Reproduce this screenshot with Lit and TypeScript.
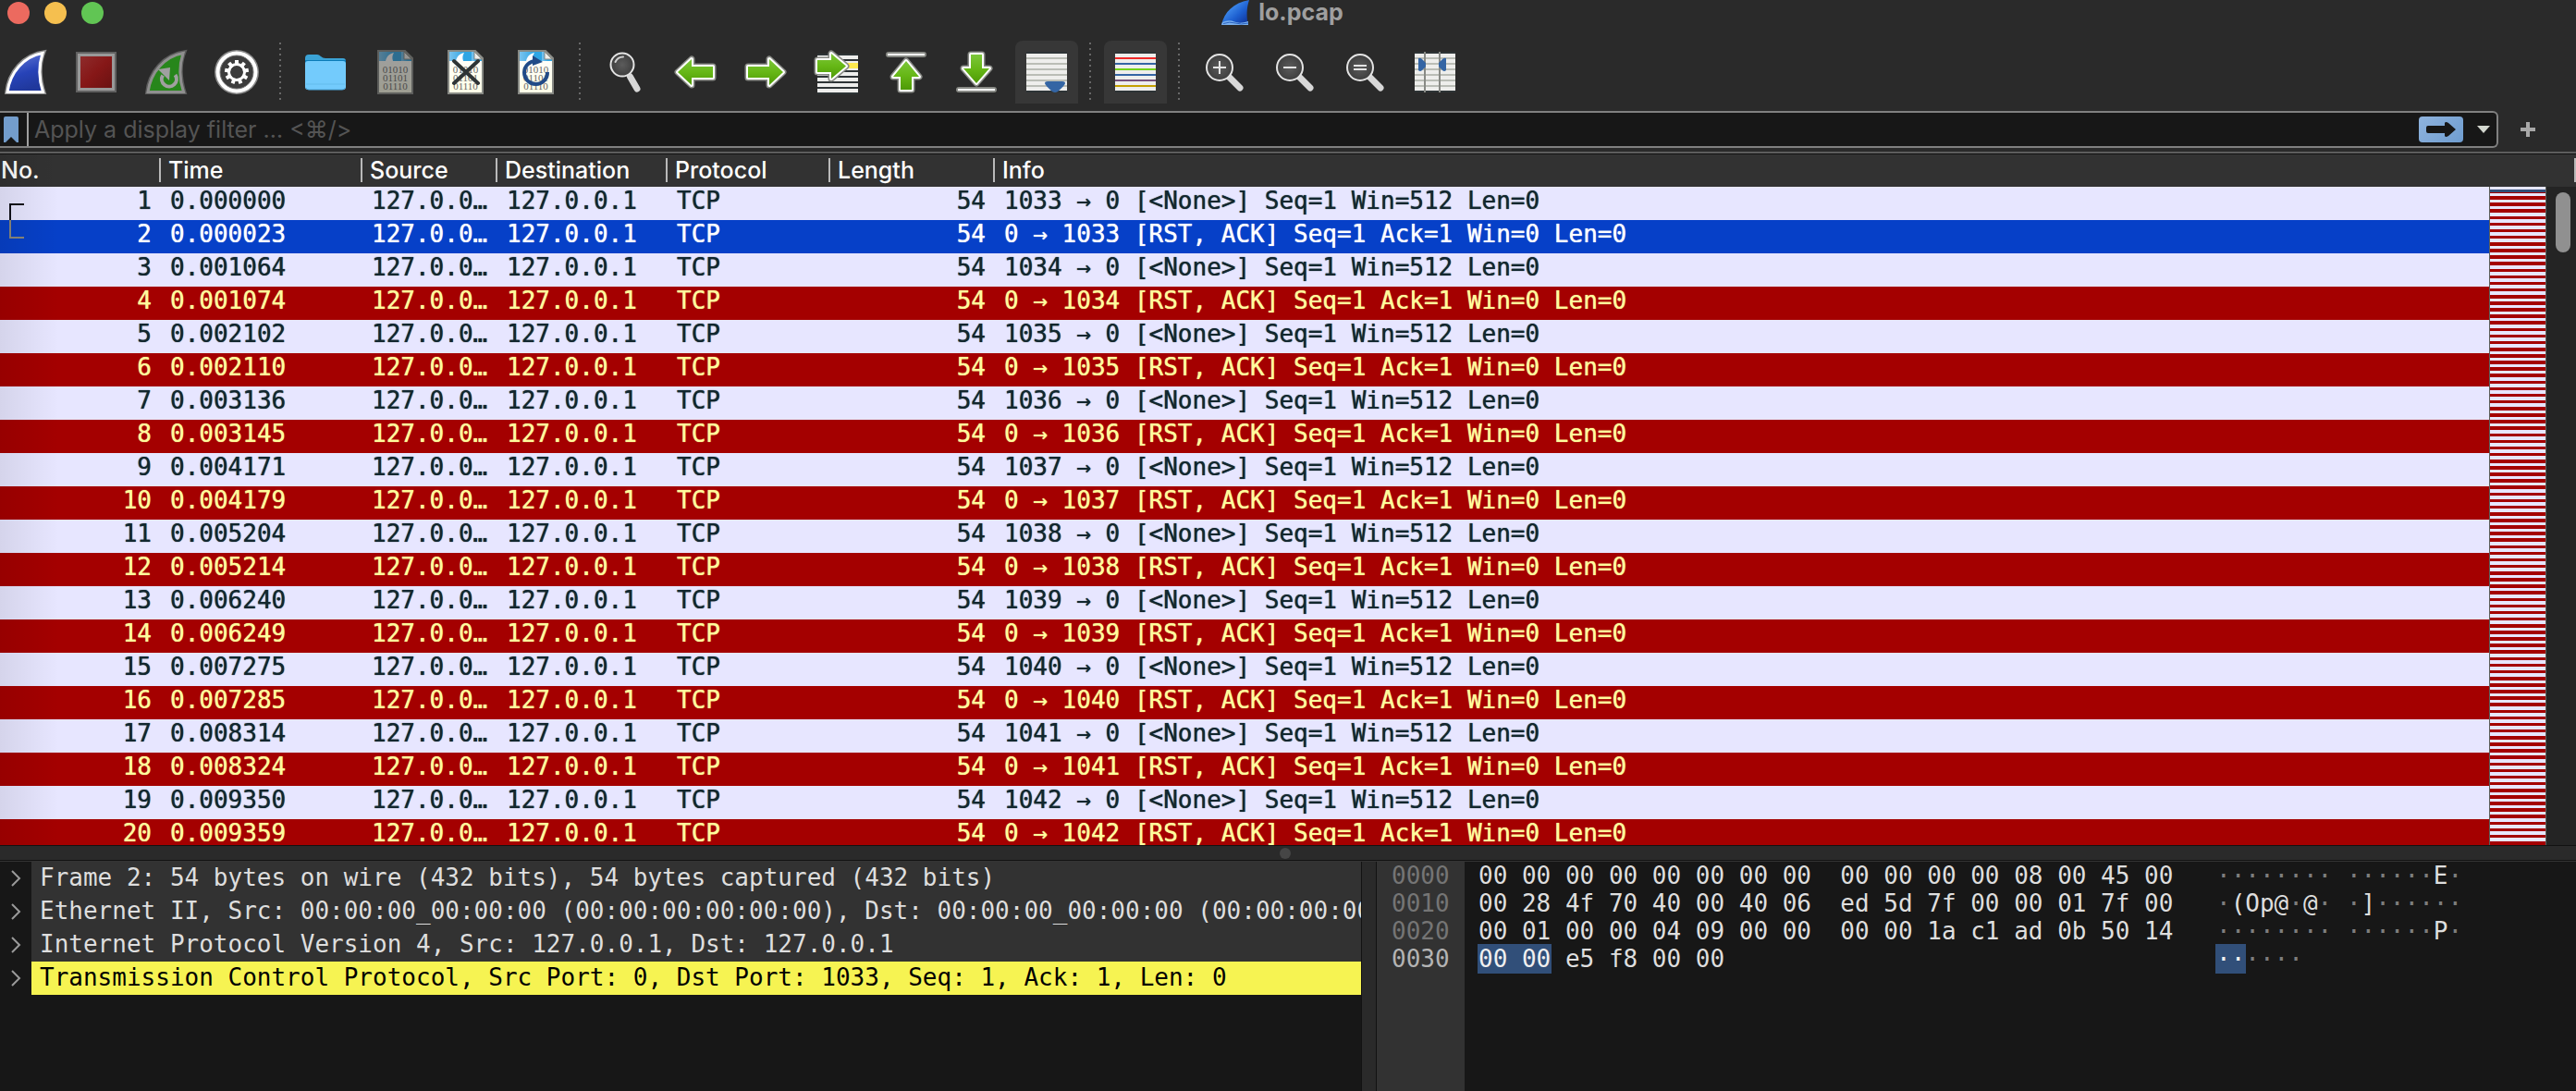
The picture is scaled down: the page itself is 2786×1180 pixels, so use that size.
import { LitElement, html, css, svg, nothing, type TemplateResult } from "lit";
import { customElement, property, state } from "lit/decorators.js";
import { classMap } from "lit/directives/class-map.js";

interface Packet {
  no: number;
  time: string;
  source: string;
  destination: string;
  protocol: string;
  length: number;
  info: string;
  reset: boolean;
}

const TIMES = [
  "0.000000", "0.000023", "0.001064", "0.001074", "0.002102", "0.002110", "0.003136",
  "0.003145", "0.004171", "0.004179", "0.005204", "0.005214", "0.006240", "0.006249",
  "0.007275", "0.007285", "0.008314", "0.008324", "0.009350", "0.009359",
];

const PACKETS: Packet[] = TIMES.map((time, i) => {
  const port = 1033 + Math.floor(i / 2);
  const reset = i % 2 === 1;
  return {
    no: i + 1,
    time,
    source: "127.0.0.1",
    destination: "127.0.0.1",
    protocol: "TCP",
    length: 54,
    info: reset
      ? `0 → ${port} [RST, ACK] Seq=1 Ack=1 Win=0 Len=0`
      : `${port} → 0 [<None>] Seq=1 Win=512 Len=0`,
    reset,
  };
});

const COLUMNS = ["No.", "Time", "Source", "Destination", "Protocol", "Length", "Info"];

const DETAILS = [
  "Frame 2: 54 bytes on wire (432 bits), 54 bytes captured (432 bits)",
  "Ethernet II, Src: 00:00:00_00:00:00 (00:00:00:00:00:00), Dst: 00:00:00_00:00:00 (00:00:00:00:00:00)",
  "Internet Protocol Version 4, Src: 127.0.0.1, Dst: 127.0.0.1",
  "Transmission Control Protocol, Src Port: 0, Dst Port: 1033, Seq: 1, Ack: 1, Len: 0",
];

const BYTES = [
  { offset: "0000", hex: "00 00 00 00 00 00 00 00  00 00 00 00 08 00 45 00", ascii: "········ ······E·" },
  { offset: "0010", hex: "00 28 4f 70 40 00 40 06  ed 5d 7f 00 00 01 7f 00", ascii: "·(Op@·@· ·]······" },
  { offset: "0020", hex: "00 01 00 00 04 09 00 00  00 00 1a c1 ad 0b 50 14", ascii: "········ ······P·" },
  { offset: "0030", hex: "00 00 e5 f8 00 00", ascii: "······", marked: { hex: 5, ascii: 2 } },
];

/* ---------- icons, all on a 48 × 48 grid ---------- */

const FIN = "M2 47 C4 23 21 4 45 1 C39 15 40 32 45 47 Z";

const page = (faded: boolean, over: TemplateResult | typeof nothing) => svg`
  <g opacity=${faded ? 0.55 : 1}>
    <path d="M5 1 H34 L42 9 V47 H5 Z" fill="url(#paper)" stroke="#888a85" stroke-width="2"/>
    <path d="M6 2 H33 V12 H6 Z" fill="url(#sky)"/>
    <path d="M33 2 V10 H41 V12 H30 V2 Z" fill="url(#sky)"/>
    <path d="M13 12 C14 7 17 4 22 3 C20 6 20 9 21 12 Z" fill="#fff"/>
    <path d="M33 2 V10 H41 Z" fill="#eeeeec" stroke="#888a85" stroke-width="1"/>
    <g class="bits">
      <text x="23.5" y="25" text-anchor="middle">01010</text>
      <text x="23.5" y="34" text-anchor="middle">01101</text>
      <text x="23.5" y="43" text-anchor="middle">01110</text>
    </g>
  </g>
  ${over}`;

const arrow = (d: string) => svg`
  <path d=${d} fill="#888a85" stroke="#888a85" stroke-width="7" stroke-linejoin="round"/>
  <path d=${d} fill="url(#leaf)" stroke="#fff" stroke-width="4" stroke-linejoin="round"/>
  <path d=${d} fill="url(#leaf)"/>`;

const sheet = (colors: string[]) => svg`
  <rect x="2" y="2" width="44" height="44" fill="#2e3436"/>
  <rect x="2" y="4" width="44" height="40" fill="#eeeeec"/>
  ${colors.map((c, i) => svg`<rect x="2" y=${8 + i * 6} width="44" height="2" fill=${c}/>`)}`;

const GREYS = Array(6).fill("#babdb6");

const lens = (sign: string) => svg`
  <path d="M30 30 L41 41" stroke="#d8d8d8" stroke-width="7" stroke-linecap="round"/>
  <circle cx="19" cy="19" r="14" fill="url(#glass)" stroke="#e4e4e4" stroke-width="2"/>
  <path d=${sign} stroke="#e4e4e4" stroke-width="2" fill="none"/>`;

const gearTeeth = Array.from({ length: 9 }, (_, i) => i * 40);

const ICONS: Record<string, TemplateResult> = {
  start: svg`
    <path d=${FIN} fill="#b0b0b0" stroke="#8c8c8c" stroke-width="2"/>
    <path d="M4 45.500 C7 24 22 7 42 3.500 C38 16 38 32 42.500 45.500 Z" fill="url(#navy)" stroke="#fff" stroke-width="3"/>`,
  stop: svg`
    <rect x="2" y="2" width="44" height="44" fill="#616161"/>
    <rect x="4" y="4" width="40" height="40" fill="#999"/>
    <rect x="7" y="7" width="34" height="34" fill="url(#blood)"/>`,
  restart: svg`
    <path d=${FIN} fill="#8c8c8c" stroke="#5c5c5c" stroke-width="2"/>
    <path d="M4 45.500 C7 24 22 7 42 3.500 C38 16 38 32 42.500 45.500 Z" fill="#27861b" stroke="#8f8f8f" stroke-width="3"/>
    <path d="M33.500 27 A8 8 0 1 1 20 27.500" fill="none" stroke="#a0a0a0" stroke-width="4"/>
    <path d="M15 21 L28 19 L27 33 Z" fill="#a0a0a0"/>`,
  options: svg`
    <circle cx="24" cy="24" r="24" fill="#8a8a8a"/>
    <circle cx="24" cy="24" r="22.500" fill="#fff"/>
    <circle cx="24" cy="24" r="18" fill="#3c3c3c" stroke="#777" stroke-width="1"/>
    ${gearTeeth.map((a) => svg`<rect x="22" y="11" width="4" height="6" fill="#fff" transform="rotate(${a} 24 24)"/>`)}
    <circle cx="24" cy="24" r="8.500" fill="none" stroke="#fff" stroke-width="3"/>`,
  open: svg`
    <path d="M2 9 Q2 5 6 5 H15 Q17 5 19 7 Q21 9 24 9 H43 Q46 9 46 12 V20 H2 Z" fill="#3ba3d6"/>
    <path d="M2 11 H46 V14 H2 Z" fill="#0c7cb8"/>
    <rect x="2" y="12" width="44" height="31" rx="3" fill="#73cbfc"/>
    <path d="M3 37 H45" stroke="#64bcec" stroke-width="1"/>
    <path d="M3 41 Q4 43 6 43 H42 Q45 43 45 41" stroke="#4aa6dc" stroke-width="1" fill="none"/>`,
  save: page(true, nothing),
  close: page(false, svg`<path d="M11 12 L37 36 M37 12 L11 36" stroke="#2e3436" stroke-width="4" stroke-linecap="round"/>`),
  reload: page(false, svg`
    <path d="M36 24 A12.500 12.500 0 1 1 24 12" fill="none" stroke="#204a87" stroke-width="4"/>
    <path d="M20 6 L31 13 L20 17 Z" fill="#204a87"/>`),
  find: svg`
    <path d="M29.500 29 L37 42" stroke="#d8d8d8" stroke-width="7" stroke-linecap="round"/>
    <path d="M27 26 L30 30" stroke="#d8d8d8" stroke-width="4"/>
    <circle cx="21" cy="16" r="12.500" fill="url(#glass)" stroke="#e4e4e4" stroke-width="2"/>
    <path d="M13.500 13 Q16 7.500 22 7.500" stroke="#cfcfcf" stroke-width="2" fill="none" stroke-linecap="round"/>`,
  back: arrow("M5 24 L20 10 V18 H43 V30 H20 V38 Z"),
  forward: arrow("M43 24 L28 10 V18 H5 V30 H28 V38 Z"),
  jump: svg`
    <rect x="4" y="4" width="44" height="44" fill="#2e3436"/>
    ${[6, 12, 18, 24, 30, 36, 42].map((y) => svg`<rect x="4" y=${y} width="44" height="4" fill="#eeeeec"/>`)}
    <rect x="34" y="14" width="14" height="6" fill="#fce94f"/>
    ${arrow("M35 17.500 L19 4 V11 H4 V24 H19 V31 Z")}`,
  first: svg`
    <rect x="2" y="2" width="44" height="6" rx="3" fill="#888a85"/>
    <rect x="4" y="4" width="40" height="2" fill="#fff"/>
    ${arrow("M24 12 L38 29 H30 V43 H18 V29 H10 Z")}`,
  last: svg`
    <rect x="2" y="40" width="44" height="6" rx="3" fill="#888a85"/>
    <rect x="4" y="42" width="40" height="2" fill="#fff"/>
    ${arrow("M24 36 L38 20 H30 V5 H18 V20 H10 Z")}`,
  autoscroll: svg`${sheet(GREYS)}<path d="M22 36 Q22 34 25 34 H41 Q44 34 44 36 Q44 38 36 45 Q33 47 30 45 Q22 38 22 36 Z" fill="#3465a4"/>`,
  colorize: sheet(["#ef2929", "#3465a4", "#73d216", "#3465a4", "#75507b", "#c4a000"]),
  zoomIn: lens("M12 19 H26 M19 12 V26"),
  zoomOut: lens("M12 19 H26"),
  zoomReset: lens("M12 17 H26 M12 21 H26"),
  resize: svg`
    ${sheet(GREYS)}
    <path d="M13 2 V46 M29 2 V46" stroke="#888a85" stroke-width="2"/>
    <path d="M6 9 Q8 8 10 10 L14 14 V18 L10 22 Q8 24 6 22 Z" fill="#3465a4"/>
    <path d="M36 9 Q34 8 32 10 L28 14 V18 L32 22 Q34 24 36 22 Z" fill="#3465a4"/>`,
};

const DEFS = svg`<defs>
  <linearGradient id="navy" x2="0.3" y2="1"><stop stop-color="#6a80d8"/><stop offset=".6" stop-color="#2743b8"/><stop offset="1" stop-color="#20389c"/></linearGradient>
  <linearGradient id="blood" x2="1" y2="1"><stop stop-color="#8e2c2c"/><stop offset=".5" stop-color="#861717"/><stop offset="1" stop-color="#6a1212"/></linearGradient>
  <linearGradient id="leaf" x2="0" y2="1"><stop stop-color="#7cc63a"/><stop offset=".5" stop-color="#66b716"/><stop offset="1" stop-color="#4e9a06"/></linearGradient>
  <linearGradient id="sky" x2="1" y2="0"><stop stop-color="#7cc4ee"/><stop offset=".6" stop-color="#2ea5e4"/></linearGradient>
  <linearGradient id="paper" x2="0" y2="1"><stop stop-color="#fff"/><stop offset="1" stop-color="#fefee6"/></linearGradient>
  <radialGradient id="glass"><stop stop-color="#5c5c5c"/><stop offset="1" stop-color="#3e3e3e"/></radialGradient>
</defs>`;

type Tool = { icon: string; label: string; on?: boolean } | null;

const TOOLS: Tool[] = [
  { icon: "start", label: "Start capture" },
  { icon: "stop", label: "Stop capture" },
  { icon: "restart", label: "Restart capture" },
  { icon: "options", label: "Capture options" },
  null,
  { icon: "open", label: "Open file" },
  { icon: "save", label: "Save file" },
  { icon: "close", label: "Close file" },
  { icon: "reload", label: "Reload file" },
  null,
  { icon: "find", label: "Find packet" },
  { icon: "back", label: "Previous packet" },
  { icon: "forward", label: "Next packet" },
  { icon: "jump", label: "Go to packet" },
  { icon: "first", label: "First packet" },
  { icon: "last", label: "Last packet" },
  { icon: "autoscroll", label: "Auto scroll", on: true },
  null,
  { icon: "colorize", label: "Colorize packets", on: true },
  null,
  { icon: "zoomIn", label: "Zoom in" },
  { icon: "zoomOut", label: "Zoom out" },
  { icon: "zoomReset", label: "Normal size" },
  { icon: "resize", label: "Resize columns" },
];

@customElement("tool-button")
export class ToolButton extends LitElement {
  @property() icon = "";
  @property() label = "";
  @property({ type: Boolean }) on = false;

  static styles = css`
    :host { display: block; }
    .button {
      display: grid;
      place-items: center;
      width: 68px;
      height: 68px;
      padding: 0;
      border: 0;
      border-radius: 8px 8px 0 0;
      background: none;
    }
    .pressed { background: #373737; }
    .icon { display: block; width: 48px; height: 48px; overflow: visible; }
    .bits {
      font: 11px "Liberation Serif", "Times New Roman", serif;
      fill: #666;
    }
  `;

  render() {
    return html`<button
      class=${classMap({ button: true, pressed: this.on })}
      type="button"
      aria-label=${this.label}
    >
      <svg class="icon" viewBox="0 0 48 48" aria-hidden="true">${DEFS}${ICONS[this.icon]}</svg>
    </button>`;
  }
}

/** Overview strip: one thin line for each of the capture's packets. */
@customElement("packet-minimap")
export class PacketMinimap extends LitElement {
  @property({ type: Number }) count = 200;

  static styles = css`
    :host { display: block; background: #e7e6ff; overflow: hidden; }
    .strip { display: block; width: 100%; height: 100%; }
  `;

  render() {
    const unit = 3.56;
    const lines = [];
    for (let n = 2; n <= this.count; n += 2) {
      const top = Math.floor((n - 1) * unit);
      const height = Math.floor(n * unit) - top;
      lines.push(svg`<rect x="0" y=${top} width="1" height=${height} fill="#a40000"/>`);
    }
    return html`<svg class="strip" viewBox="0 0 1 712" preserveAspectRatio="none" shape-rendering="crispEdges" aria-hidden="true">
      ${lines}<rect x="0" y="3" width="1" height="3" fill="#314f79"/>
    </svg>`;
  }
}

@customElement("packet-list")
export class PacketList extends LitElement {
  @property({ attribute: false }) packets: Packet[] = [];
  @state() private selected = 2;

  static styles = css`
    :host {
      display: flex;
      min-height: 0;
      overflow: hidden;
      background: #323232;
      color: #12272e;
      font-family: "DejaVu Sans Mono", Menlo, monospace;
      font-size: 26px;
    }
    .list { flex: 1; min-width: 0; overflow: hidden; position: relative; }
    .shade {
      position: absolute;
      inset: 0 auto 0 0;
      width: 64px;
      background: linear-gradient(90deg, rgba(0, 0, 0, 0.08), transparent);
      pointer-events: none;
    }
    .table { width: 100%; border-collapse: collapse; table-layout: fixed; }
    .c-no { width: 174px; }
    .c-time { width: 218px; }
    .c-source { width: 146px; }
    .c-destination { width: 184px; }
    .c-protocol { width: 176px; }
    .c-length { width: 178px; }
    .head { padding: 4px 0 5px; text-align: left; }
    .title {
      display: block;
      padding-left: 8px;
      border-right: 2px solid #b9b9b9;
      color: #fff;
      font: 500 25px/26px Inter, "Helvetica Neue", sans-serif;
      white-space: nowrap;
    }
    .head:first-child .title { padding-left: 1px; }
    .head:last-child .title { border-right: 0; }
    .row { background: #e7e6ff; text-shadow: 0 0 1px currentColor; }
    .reset { background: #a40000; color: #fffc9c; }
    .selected { background: #0640c8; color: #fff; }
    .cell {
      padding: 0 8px 6px 10px;
      line-height: 30px;
      overflow: hidden;
      text-overflow: ellipsis;
      white-space: nowrap;
    }
    .right { text-align: right; padding-right: 10px; }
    .number { padding: 0 10px; }
    .number-line { display: flex; justify-content: space-between; height: 36px; }
    .link { width: 14px; height: 16px; border: 0 solid #101018; border-left-width: 2px; }
    .link-start { margin-top: 18px; border-top-width: 2px; }
    .link-end { border-bottom-width: 2px; border-color: #8a887c; height: 18px; }
    .side { display: flex; flex-direction: column; width: 94px; }
    .side-head { display: flex; justify-content: flex-end; padding: 4px 0 5px; }
    .side-mark { width: 2px; height: 26px; background: #b9b9b9; }
    .side-body { flex: 1; min-height: 0; display: flex; background: #242424; }
    .map { width: 60px; border: 0 solid #5c5f5b; border-left-width: 1px; border-right-width: 1px; }
    .track { flex: 1; display: flex; justify-content: center; padding: 6px 0 0 3px; }
    .thumb { width: 16px; height: 65px; border-radius: 8px; background: #909090; }
  `;

  private link(no: number) {
    if (no === 1) return html`<span class="link link-start"></span>`;
    if (no === 2) return html`<span class="link link-end"></span>`;
    return html`<span></span>`;
  }

  render() {
    return html`
      <div class="list">
        <table class="table">
          <colgroup>
            ${COLUMNS.map((c) => html`<col class=${"c-" + c.toLowerCase().replace(".", "")} />`)}
          </colgroup>
          <thead>
            <tr>
              ${COLUMNS.map((c) => html`<th class="head" scope="col"><span class="title">${c}</span></th>`)}
            </tr>
          </thead>
          <tbody>
            ${this.packets.map(
              (p) => html`<tr
                class=${classMap({ row: true, reset: p.reset, selected: p.no === this.selected })}
                @click=${() => (this.selected = p.no)}
              >
                <td class="cell number"><div class="number-line">${this.link(p.no)}<span>${p.no}</span></div></td>
                <td class="cell">${p.time}</td>
                <td class="cell">${p.source}</td>
                <td class="cell">${p.destination}</td>
                <td class="cell">${p.protocol}</td>
                <td class="cell right">${p.length}</td>
                <td class="cell">${p.info}</td>
              </tr>`
            )}
          </tbody>
        </table>
        <div class="shade"></div>
      </div>
      <div class="side">
        <div class="side-head"><span class="side-mark"></span></div>
        <div class="side-body">
          <packet-minimap class="map"></packet-minimap>
          <div class="track"><div class="thumb"></div></div>
        </div>
      </div>
    `;
  }
}

@customElement("packet-details")
export class PacketDetails extends LitElement {
  static styles = css`
    :host {
      display: block;
      overflow: hidden;
      background: #171717;
      color: #dedede;
      font-family: "DejaVu Sans Mono", Menlo, monospace;
      font-size: 26px;
    }
    .tree { margin: 0; padding: 0; list-style: none; }
    .item { display: grid; grid-template-columns: 34px minmax(0, 1fr); height: 36px; }
    .toggle { display: grid; place-items: center; padding: 0; border: 0; background: none; }
    .chevron { display: block; width: 12px; height: 18px; }
    .text { padding-left: 9px; background: #323232; line-height: 34px; white-space: nowrap; overflow: hidden; }
    .marked { background: #f6f352; color: #000; }
  `;

  render() {
    return html`<ul class="tree">
      ${DETAILS.map(
        (line, i) => html`<li class="item">
          <button class="toggle" type="button" aria-label="Expand" aria-expanded="false">
            <svg class="chevron" viewBox="0 0 12 18" aria-hidden="true">
              <path d="M2 1 L10 9 L2 17" fill="none" stroke="#9a9a9a" stroke-width="2" />
            </svg>
          </button>
          <span class=${classMap({ text: true, marked: i === 3 })}>${line}</span>
        </li>`
      )}
    </ul>`;
  }
}

@customElement("packet-bytes")
export class PacketBytes extends LitElement {
  static styles = css`
    :host {
      display: grid;
      grid-template-columns: 95px minmax(0, 1fr);
      overflow: hidden;
      background: #171717;
      color: #dedede;
      font-family: "DejaVu Sans Mono", Menlo, monospace;
      font-size: 26px;
      line-height: 30px;
    }
    .offsets { padding-left: 16px; background: #323232; color: #757575; }
    .current { color: #b4b4b4; }
    .offset { display: block; }
    .dump { display: grid; grid-template-columns: 798px 1fr; grid-auto-rows: 30px; padding-left: 15px; white-space: pre; }
    .mark { padding: 1px; margin: 0 -1px; background: #314f79; color: #f0f0f0; }
    .dot { color: #7d7d7d; }
  `;

  private ascii(text: string) {
    return text.split(/(·+)/).map((part) => (part.startsWith("·") ? html`<span class="dot">${part}</span>` : part));
  }

  render() {
    return html`
      <div class="offsets">
        ${BYTES.map((b) => html`<span class=${classMap({ offset: true, current: !!b.marked })}>${b.offset}</span>`)}
      </div>
      <div class="dump">
        ${BYTES.map((b) => {
          const h = b.marked?.hex ?? 0;
          const a = b.marked?.ascii ?? 0;
          return html`<span>${h ? html`<span class="mark">${b.hex.slice(0, h)}</span>` : nothing}${b.hex.slice(h)}</span
            ><span>${a ? html`<span class="mark">${b.ascii.slice(0, a)}</span>` : nothing}${this.ascii(b.ascii.slice(a))}</span>`;
        })}
      </div>
    `;
  }
}

@customElement("app-root")
export class AppRoot extends LitElement {
  static styles = css`
    :host {
      display: flex;
      flex-direction: column;
      height: 100vh;
      overflow: hidden;
      background: #2a2a2a;
      color: #fff;
      font-family: Inter, "Helvetica Neue", sans-serif;
      font-size: 25px;
    }
    .titlebar {
      display: grid;
      grid-template-columns: 1fr auto 1fr;
      align-items: center;
      height: 28px;
      padding: 0 20px 16px 8px;
    }
    .lights { display: flex; gap: 16px; }
    .light { width: 24px; height: 24px; padding: 0; border: 0; border-radius: 50%; }
    .red { background: #ec6a5f; }
    .amber { background: #f5bf4f; }
    .green { background: #61c554; }
    .title {
      display: flex;
      gap: 10px;
      height: 28px;
      color: #9f9f9f;
      font-size: 25px;
      font-weight: 700;
      line-height: 26px;
    }
    .fin { display: block; width: 30px; height: 28px; }
    .toolbar { display: flex; gap: 8px; height: 68px; margin-left: -6px; }
    .divider { width: 12px; display: flex; padding: 2px 0 0 4px; box-sizing: border-box; }
    .dots { display: block; width: 2px; height: 62px; background: repeating-linear-gradient(#686868 0 2px, transparent 2px 6px); }
    .filterbar { display: flex; align-items: center; gap: 22px; padding: 8px 42px 4px 0; }
    .filter {
      flex: 1;
      display: flex;
      align-items: center;
      height: 36px;
      border: 2px solid #808080;
      border-left: 0;
      border-radius: 0 6px 6px 0;
      background: #171717;
    }
    .bookmark { width: 31px; height: 36px; padding: 0 0 0 4px; border: 0; border-right: 2px solid #a0a0a0; background: none; }
    .bookmark-icon { display: block; width: 16px; height: 28px; }
    .field {
      flex: 1;
      min-width: 0;
      height: 36px;
      padding: 0 0 0 6px;
      border: 0;
      outline: 0;
      background: none;
      color: #fff;
      font: 25px Inter, "DejaVu Sans", sans-serif;
    }
    .field::placeholder { color: #545454; opacity: 1; }
    .apply { width: 48px; height: 28px; padding: 0; border: 0; border-radius: 4px; background: linear-gradient(135deg, #8fb3dd, #6f9dd0); }
    .apply-icon { display: block; width: 48px; height: 28px; }
    .recent { width: 36px; height: 36px; padding: 0 0 0 8px; border: 0; background: none; display: grid; place-items: center; }
    .recent-icon { display: block; width: 14px; height: 8px; }
    .add { width: 20px; height: 20px; padding: 0; border: 0; background: none; }
    .add-icon { display: block; width: 20px; height: 20px; }
    .rule { height: 2px; background: #5e5e5e; border-bottom: 1px solid #111; }
    .packets { flex: 1; }
    .splitter { display: grid; place-items: center; height: 15px; padding-right: 6px; border: 0 solid #121212; border-top-width: 1px; border-bottom-width: 1px; }
    .grip { width: 12px; height: 12px; border-radius: 50%; background: #464646; }
    .panes { display: grid; grid-template-columns: 1472fr 17px 1297fr; height: 248px; border-top: 1px solid #333; }
    .divide { border: 0 solid #121212; border-left-width: 1px; border-right-width: 1px; background: #2a2a2a; }
  `;

  render() {
    return html`
      <header class="titlebar">
        <div class="lights">
          <button class="light red" type="button" aria-label="Close"></button>
          <button class="light amber" type="button" aria-label="Minimize"></button>
          <button class="light green" type="button" aria-label="Zoom"></button>
        </div>
        <div class="title">
          <svg class="fin" viewBox="0 0 30 28" aria-hidden="true">
            <defs>
              <linearGradient id="fin" x2="1" y2="1">
                <stop offset=".2" stop-color="#4b9bf5" /><stop offset=".6" stop-color="#1d5fd0" /><stop offset="1" stop-color="#0c2a8c" />
              </linearGradient>
            </defs>
            <path d="M0 27 C3 13 13 3 30 0 C27 9 27 18 29 27 Z" fill="url(#fin)" />
            <path d="M1 24 Q8 21 14 23.500 T29 23 V27 H0 Z" fill="#7ab0ee" />
            <path d="M2 25.500 Q9 23 15 25 T29 25" fill="none" stroke="#2a62c0" stroke-width="1" />
          </svg>
          <span>lo.pcap</span>
        </div>
      </header>

      <nav class="toolbar" aria-label="Main toolbar">
        ${TOOLS.map((t) =>
          t
            ? html`<tool-button .icon=${t.icon} .label=${t.label} .on=${!!t.on}></tool-button>`
            : html`<div class="divider"><span class="dots"></span></div>`
        )}
      </nav>

      <div class="filterbar">
        <div class="filter">
          <button class="bookmark" type="button" aria-label="Filter bookmarks">
            <svg class="bookmark-icon" viewBox="0 0 16 28" aria-hidden="true">
              <path d="M0 2 Q0 0 2 0 H14 Q16 0 16 2 V28 H14 L8 22 L2 28 H0 Z" fill="#739dcc" />
            </svg>
          </button>
          <input class="field" type="text" aria-label="Display filter" placeholder="Apply a display filter … <⌘/>" />
          <button class="apply" type="button" aria-label="Apply filter">
            <svg class="apply-icon" viewBox="0 0 48 28" aria-hidden="true">
              <path d="M8 12 Q8 10 10 10 H28 V7 Q29 5 32 7 L40 14 L32 21 Q29 23 28 21 V18 H10 Q8 18 8 16 Z" fill="#171717" />
            </svg>
          </button>
          <button class="recent" type="button" aria-label="Recent filters">
            <svg class="recent-icon" viewBox="0 0 14 8" aria-hidden="true"><path d="M0 0 H14 L7 8 Z" fill="#d3d7cf" /></svg>
          </button>
        </div>
        <button class="add" type="button" aria-label="Add filter button">
          <svg class="add-icon" viewBox="0 0 20 20" aria-hidden="true"><path d="M10 2 V18 M2 10 H18" stroke="#a8a8a8" stroke-width="4" /></svg>
        </button>
      </div>
      <div class="rule"></div>

      <packet-list class="packets" .packets=${PACKETS}></packet-list>
      <div class="splitter"><span class="grip"></span></div>
      <div class="panes">
        <packet-details></packet-details>
        <div class="divide"></div>
        <packet-bytes></packet-bytes>
      </div>
    `;
  }
}
